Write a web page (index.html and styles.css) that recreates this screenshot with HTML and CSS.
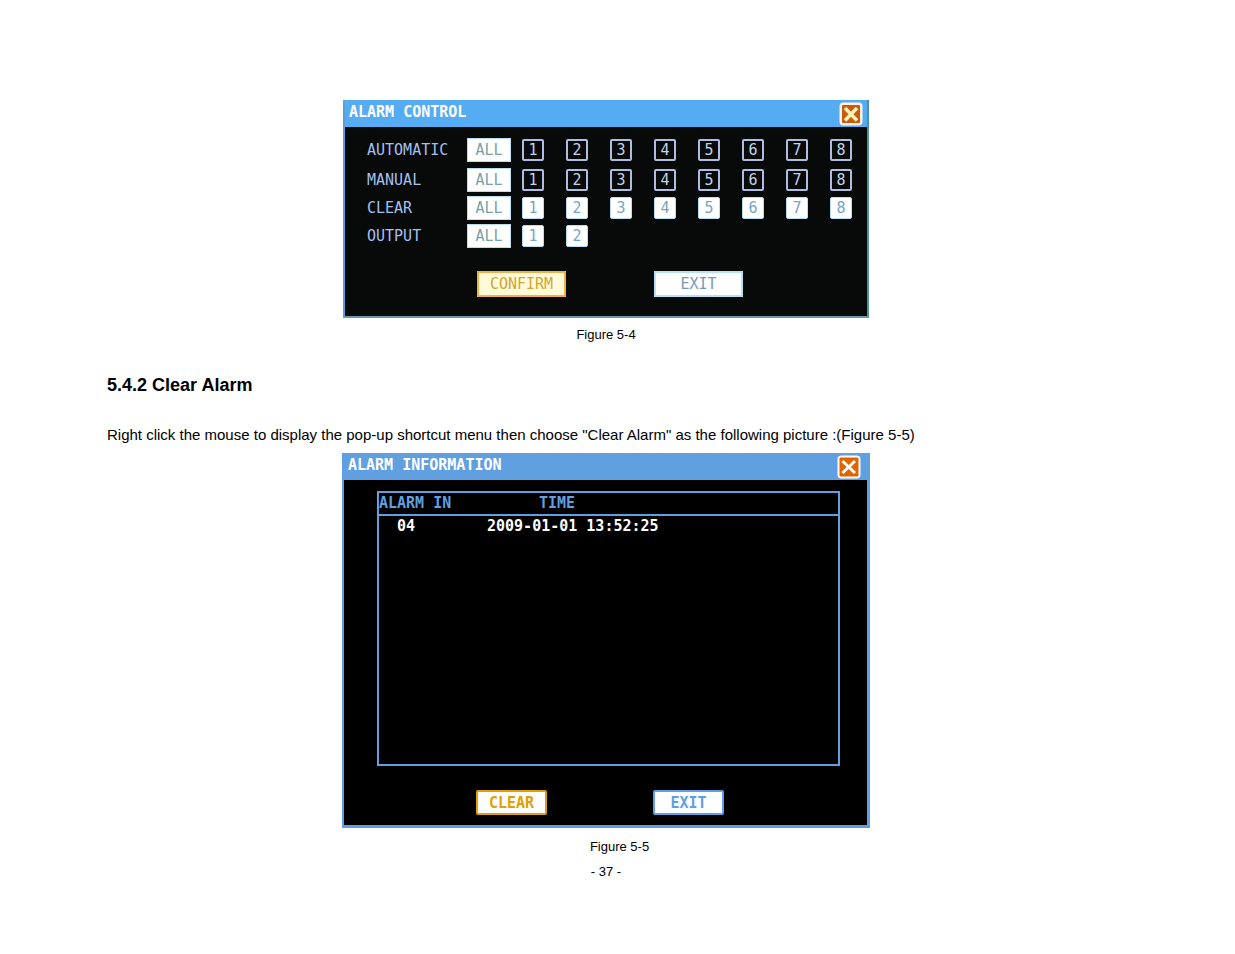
FILE: index.html
```html
<!DOCTYPE html>
<html lang="en">
<head>
  <meta charset="UTF-8">
  <title>5.4.2 Clear Alarm</title>
  <meta name="viewport" content="width=device-width, initial-scale=1.0">
  <link rel="stylesheet" href="styles.css">
</head>
<body>

<main class="page">

  <!-- Alarm control dialog -->
  <figure>
    <div class="dialog control">
      <div class="title-bar">
        <span>ALARM CONTROL</span>
        <button class="close" aria-label="Close">
          <svg viewBox="0 0 24 24"><rect x="0.500" y="0.500" width="23" height="23" rx="4" fill="#fff3e6"/><rect x="3" y="3" width="18" height="18" rx="1" fill="#c95a12"/><path d="M6 6L18 18.500M18 6L6 18.500" stroke="#fff3b0" stroke-width="3.500"/></svg>
        </button>
      </div>
      <div class="control-grid" id="controlGrid"></div>
      <div class="actions">
        <button class="action confirm">CONFIRM</button>
        <button class="action">EXIT</button>
      </div>
    </div>
    <figcaption>Figure 5-4</figcaption>
  </figure>

  <h1>5.4.2 Clear Alarm</h1>
  <p>Right click the mouse to display the pop-up shortcut menu then choose "Clear Alarm" as the following picture :(Figure 5-5)</p>

  <!-- Alarm information dialog -->
  <figure>
    <div class="dialog info">
      <div class="title-bar">
        <span>ALARM INFORMATION</span>
        <button class="close" aria-label="Close">
          <svg viewBox="0 0 24 24"><rect x="0.500" y="0.500" width="23" height="23" rx="4" fill="#fff"/><rect x="2.500" y="2.500" width="19" height="19" rx="1" fill="#e06400"/><path d="M5.500 6L18 18M18 6L5.500 18" stroke="#fff" stroke-width="3"/></svg>
        </button>
      </div>
      <div class="list">
        <table>
          <thead>
            <tr><th class="alarm-col">ALARM IN</th><th class="time-col">TIME</th></tr>
          </thead>
          <tbody>
            <tr><td class="alarm-no">04</td><td>2009-01-01 13:52:25</td></tr>
          </tbody>
        </table>
      </div>
      <div class="actions">
        <button class="action clear">CLEAR</button>
        <button class="action">EXIT</button>
      </div>
    </div>
    <figcaption class="shifted">Figure 5-5</figcaption>
  </figure>

  <footer>- 37 -</footer>
</main>

<script>
  const rows = [
    { label: "AUTOMATIC", count: 8, filled: false },
    { label: "MANUAL", count: 8, filled: false },
    { label: "CLEAR", count: 8, filled: true },
    { label: "OUTPUT", count: 2, filled: true }
  ];

  const grid = document.getElementById('controlGrid');
  rows.forEach(row => {
    const div = document.createElement('div');
    div.className = 'control-row';
    let html = `<span>${row.label}</span><button class="all">ALL</button>`;
    for (let i = 1; i <= row.count; i++) {
      html += `<button class="channel${row.filled ? ' filled' : ''}" aria-label="${row.label} ${i}">${i}</button>`;
    }
    div.innerHTML = html;
    grid.appendChild(div);
  });
</script>

</body>
</html>
```
FILE: styles.css
```css
* {
  box-sizing: border-box;
}

body {
  margin: 0;
  background: #fff;
  color: #000;
  font-family: "Liberation Sans", Arial, sans-serif;
}

.page {
  padding: 100px 130px 40px 107px;
}

figure {
  margin: 0;
}

figcaption,
footer {
  font-size: 13px;
  line-height: 20px;
  text-align: center;
}

figcaption {
  margin-top: 7px;
}

.shifted {
  margin-top: 9px;
  padding-left: 27px;
}

footer {
  margin-top: 5px;
}

h1 {
  margin: 28px 0 26px;
  font-size: 18px;
  line-height: 24px;
}

p {
  margin: 0 0 6px;
  font-size: 15px;
  line-height: 24px;
}

.dialog {
  max-width: 528px;
  margin: 0 auto;
  font-family: "DejaVu Sans Mono", monospace;
  font-size: 15px;
}

.dialog button {
  padding: 0;
  font-family: inherit;
  font-size: 15px;
  line-height: 20px;
  cursor: pointer;
}

.title-bar {
  display: flex;
  justify-content: space-between;
  height: 27px;
  padding: 0 6px 0 4px;
  color: #fff;
  font-weight: bold;
  line-height: 24px;
}

.dialog .close {
  width: 24px;
  height: 24px;
  margin-top: 2px;
  border: none;
  background: none;
}

.close svg {
  display: block;
}

.actions {
  display: flex;
}

/* Alarm control */
.control {
  max-width: 526px;
  background: #080a09;
  border: solid #5b9fdf;
  border-width: 0 2px 2px;
  border-right-color: #4a929c;
  border-bottom-color: #6799b5;
}

.control .title-bar {
  padding-right: 4px;
  background: #55acf3;
}

.control-grid {
  padding: 7px 0 0 22px;
}

.control-row {
  display: grid;
  grid-template-columns: 100px repeat(9, 44px);
  align-items: center;
  height: 28px;
  color: #a5bfee;
}

.control-row:first-child {
  height: 32px;
}

.control .all {
  height: 24px;
  border: 1px solid #b9dcf5;
  background: #fff;
  color: #7b9fa6;
}

.channel {
  justify-self: center;
  width: 22px;
  height: 22px;
  border: 2px solid #b0bde0;
  border-radius: 2px;
  background: #080a09;
  color: #c0d3e8;
}

.dialog .channel {
  line-height: 18px;
}

.control .filled {
  border: 1px solid #b9dcf5;
  background: #fff;
  color: #79a3c5;
}

.control .actions {
  gap: 88px;
  padding: 21px 0 19px 132px;
}

.control .action {
  width: 89px;
  height: 26px;
  border: 2px solid #b4e1f5;
  background: #fff;
  color: #739bb8;
}

.control .confirm {
  border-color: #f0b04b;
  background: #fffbd9;
  color: #d2a537;
}

/* Alarm information */
.info {
  background: #000;
  border: solid #609fe0;
  border-width: 0 3px 3px 2px;
}

.info .title-bar {
  background: #609fe0;
}

.list {
  min-height: 275px;
  margin: 11px 27px 24px 33px;
  border: 2px solid #609fe0;
}

table {
  width: 100%;
  border-collapse: collapse;
  line-height: 21px;
}

th {
  padding: 0;
  border-bottom: 2px solid #609fe0;
  color: #609fe0;
  text-align: left;
}

td {
  padding: 0;
  color: #fff;
  font-weight: bold;
}

.alarm-col {
  width: 108px;
}

.time-col {
  padding-left: 52px;
}

.alarm-no {
  padding-left: 18px;
}

.info .actions {
  gap: 106px;
  padding: 0 0 10px 132px;
}

.info .action {
  width: 71px;
  height: 25px;
  border: 2px solid #609fe0;
  border-radius: 2px;
  background: #fff;
  color: #609fe0;
  font-weight: bold;
}

.info .clear {
  border-color: #e0a000;
  color: #e0a000;
}
```
